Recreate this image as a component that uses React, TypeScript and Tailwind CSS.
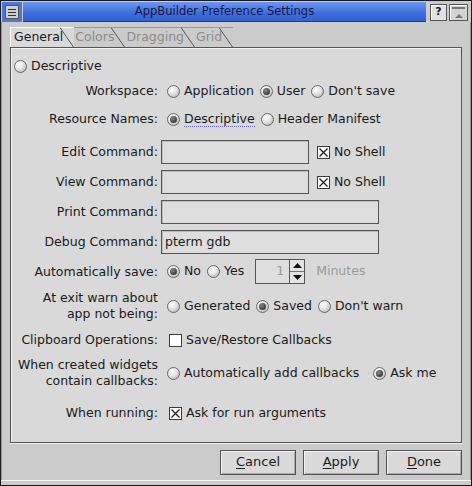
import React from 'react';

const font = { fontFamily: '"DejaVu Sans", "Liberation Sans", sans-serif' };

function Radio({ on, label, focus }: { on?: boolean; label: string; focus?: boolean }) {
  return (
    <span className="flex items-center gap-[4px]">
      <span className="relative flex h-[13px] w-[13px] items-center justify-center rounded-full border border-[#6a6a6a] bg-[radial-gradient(circle_at_35%_30%,#ffffff_0%,#e4e4e4_45%,#a8a8a8_100%)]">
        {on && <span className="h-[7px] w-[7px] rounded-full bg-[radial-gradient(circle_at_40%_35%,#8a8a8a_0%,#3a3a3a_70%)]" />}
      </span>
      <span className={focus ? 'border-b border-dotted border-[#6060d0] leading-[14px]' : ''}>{label}</span>
    </span>
  );
}

function Check({ on, label }: { on?: boolean; label: string }) {
  return (
    <span className="flex items-center gap-[4px]">
      <span className="flex h-[13px] w-[13px] items-center justify-center border border-[#3a3a3a] bg-white">
        {on && (
          <svg width="9" height="9" viewBox="0 0 9 9">
            <path d="M0.5 0.5 L8.5 8.5 M8.5 0.5 L0.5 8.5" stroke="#222" strokeWidth="1.3" />
          </svg>
        )}
      </span>
      <span>{label}</span>
    </span>
  );
}

function Field({ w, value }: { w: string; value?: string }) {
  return (
    <div className={`${w} flex h-[24px] items-center border border-[#555] bg-[#dedede] px-[3px] shadow-[inset_1px_1px_0_#bcbcbc]`}>
      {value}
    </div>
  );
}

function Row({ label, top, h = 'h-[24px]', children }: { label: React.ReactNode; top: string; h?: string; children: React.ReactNode }) {
  return (
    <div className={`grid grid-cols-[147px_1fr] gap-x-[3px] ${h} ${top}`}>
      <div className="flex items-center justify-end text-right leading-[16px]">{label}</div>
      <div className="flex items-center">{children}</div>
    </div>
  );
}

function Tab({ label, active, first }: { label: string; active?: boolean; first?: boolean }) {
  return (
    <div
      className={`relative flex h-[20px] items-center pr-[11px] ${first ? 'pl-[3px]' : '-ml-[5px] pl-[6px]'} ${
        active ? 'z-10 border-l border-t border-l-white border-t-white bg-[#d9d9d9] text-[#1a1a1a]' : 'border-t border-t-[#9a9a9a] text-[#8c8c8c]'
      }`}
    >
      {label}
      <svg className="absolute right-0 top-[-1px]" width="14" height="21" viewBox="0 0 14 21">
        <path d="M0 0.5 L13.5 20" stroke="#555" strokeWidth="1" fill="none" />
      </svg>
    </div>
  );
}

function Btn({ mn, rest }: { mn: string; rest: string }) {
  return (
    <button className="flex h-[25px] w-[76px] items-center justify-center border border-[#555] bg-[#dadada] text-[13px] text-[#1a1a1a] shadow-[inset_1px_1px_0_#f4f4f4,inset_-1px_-1px_0_#a8a8a8]">
      <span className="underline underline-offset-2">{mn}</span>
      {rest}
    </button>
  );
}

export default function App() {
  return (
    <div style={font} className="flex h-[486px] w-[472px] flex-col border border-[#1a1a1a] bg-[#cbcbcb] text-[12.5px] text-[#1a1a1a]">
      {/* title bar */}
      <div className="mx-[1px] mt-[1px] flex h-[20px] items-stretch gap-[1px]">
        <div className="flex w-[20px] items-center justify-center bg-[#4a78dc]">
          <div className="flex h-[14px] w-[14px] flex-col justify-center gap-[2px] border border-[#555] bg-[#cfcfcf] px-[2px]">
            <div className="h-[1px] bg-[#333]" />
            <div className="h-[1px] bg-[#333]" />
            <div className="h-[1px] bg-[#333]" />
          </div>
        </div>
        <div className="flex w-[403px] items-center justify-center border-b border-[#1c3c90] bg-[linear-gradient(#6c96f0,#3d6ddb_60%,#3262d0)] text-[11.5px] text-[#16164a]">
          AppBuilder Preference Settings
        </div>
        <div className="ml-[3px] flex items-center gap-[2px]">
          <div className="flex h-[17px] w-[17px] items-center justify-center border border-[#555] bg-[#e2e2e2] text-[11px] font-bold shadow-[inset_1px_1px_0_#fff]">?</div>
          <div className="flex h-[17px] w-[19px] flex-col items-center justify-between border border-[#555] bg-[#d4d4d4] py-[2px] shadow-[inset_1px_1px_0_#fff]">
            <div className="h-[2px] w-[13px] bg-[#777]" />
            <svg width="8" height="5" viewBox="0 0 8 5">
              <path d="M0 5 L4 1 L8 5 Z" fill="#777" />
            </svg>
          </div>
        </div>
      </div>

      {/* body */}
      <div className="flex flex-1 flex-col border-x border-[#9a9a9a] px-[8px] pt-[4px]">
        <div className="flex h-[21px] items-end">
          <Tab label="General" active first />
          <Tab label="Colors" />
          <Tab label="Dragging" />
          <Tab label="Grid" />
        </div>
        <div className="flex h-[396px] flex-col border border-[#555] bg-[#d9d9d9] shadow-[inset_1px_1px_0_#f2f2f2]">
          <div className="ml-[3px] mt-[6px] flex h-[24px] items-center">
            <Radio label="Descriptive" />
          </div>

          <Row label="Workspace:" top="mt-[1px]">
            <div className="ml-[6px] flex gap-[6px]">
              <Radio label="Application" />
              <Radio label="User" on />
              <Radio label="Don't save" />
            </div>
          </Row>
          <Row label="Resource Names:" top="mt-[4px]">
            <div className="ml-[6px] flex gap-[6px]">
              <Radio label="Descriptive" on focus />
              <Radio label="Header Manifest" />
            </div>
          </Row>
          <Row label="Edit Command:" top="mt-[9px]">
            <Field w="w-[148px]" />
            <div className="ml-[8px]">
              <Check label="No Shell" on />
            </div>
          </Row>
          <Row label="View Command:" top="mt-[6px]">
            <Field w="w-[148px]" />
            <div className="ml-[8px]">
              <Check label="No Shell" on />
            </div>
          </Row>
          <Row label="Print Command:" top="mt-[6px]">
            <Field w="w-[218px]" />
          </Row>
          <Row label="Debug Command:" top="mt-[6px]">
            <Field w="w-[218px]" value="pterm gdb" />
          </Row>
          <Row label="Automatically save:" top="mt-[5px]" h="h-[25px]">
            <div className="ml-[6px] flex items-center gap-[6px]">
              <Radio label="No" on />
              <Radio label="Yes" />
            </div>
            <div className="ml-[11px] flex h-[25px] border border-[#555] bg-[#dedede]">
              <div className="flex w-[33px] items-center justify-end pr-[5px] text-[#999]">1</div>
              <div className="flex w-[15px] flex-col border-l border-[#555]">
                <div className="flex flex-1 items-center justify-center border-b border-[#777] bg-[#e4e4e4]">
                  <svg width="9" height="5" viewBox="0 0 9 5"><path d="M0 5 L4.5 0 L9 5 Z" fill="#111" /></svg>
                </div>
                <div className="flex flex-1 items-center justify-center bg-[#e4e4e4]">
                  <svg width="9" height="5" viewBox="0 0 9 5"><path d="M0 0 L4.5 5 L9 0 Z" fill="#111" /></svg>
                </div>
              </div>
            </div>
            <span className="ml-[11px] text-[#999]">Minutes</span>
          </Row>
          <Row
            label={
              <span>
                At exit warn about
                <br />
                app not being:
              </span>
            }
            top="mt-[6px]"
            h="h-[32px]"
          >
            <div className="ml-[6px] flex gap-[6px]">
              <Radio label="Generated" />
              <Radio label="Saved" on />
              <Radio label="Don't warn" />
            </div>
          </Row>
          <Row label="Clipboard Operations:" top="mt-[6px]">
            <div className="ml-[8px]">
              <Check label="Save/Restore Callbacks" />
            </div>
          </Row>
          <Row
            label={
              <span>
                When created widgets
                <br />
                contain callbacks:
              </span>
            }
            top="mt-[5px]"
            h="h-[32px]"
          >
            <div className="ml-[6px] flex gap-[14px]">
              <Radio label="Automatically add callbacks" />
              <Radio label="Ask me" on />
            </div>
          </Row>
          <Row label="When running:" top="mt-[12px]">
            <div className="ml-[8px]">
              <Check label="Ask for run arguments" on />
            </div>
          </Row>
        </div>

        {/* action buttons */}
        <div className="flex flex-1 items-center justify-end gap-[7px] border-t border-[#f0f0f0]">
          <Btn mn="C" rest="ancel" />
          <Btn mn="A" rest="pply" />
          <Btn mn="D" rest="one" />
        </div>
      </div>
      <div className="h-[5px] border-t border-[#f4f4f4] bg-[#cbcbcb]" />
    </div>
  );
}
